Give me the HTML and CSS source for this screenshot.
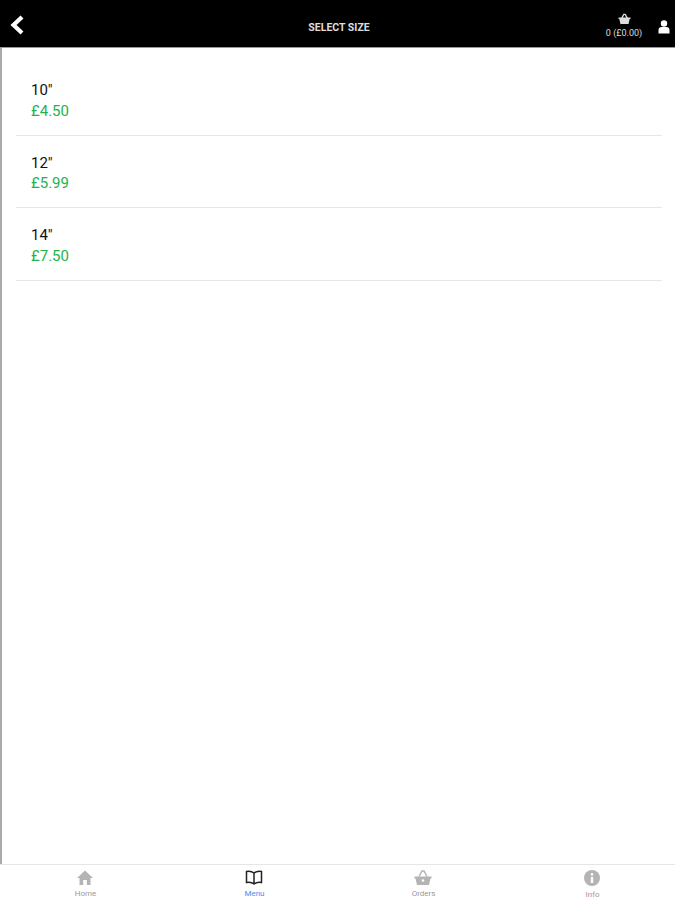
FILE: index.html
```html
<!doctype html>
<html>
<head>
<meta charset="utf-8">
<title>Select size</title>
<link rel="stylesheet" href="styles.css">
</head>
<body>
<div class="page">
  <div class="header">
    <div class="back">
      <svg width="16" height="22" viewBox="0 0 16 22"><path d="M13 3 L4.500 11 L13 19" fill="none" stroke="#fff" stroke-width="4.200"/></svg>
    </div>
    <div class="title">SELECT SIZE</div>
    <div class="basket">
      <svg width="13" height="11" viewBox="0 0 24 20"><path d="M1 8h22v3h-1.500l-2 9h-15l-2-9H1z M6 8l4-7h4l4 7h-3l-2.500-4.500h-1L9 8z" fill="#ddd"/></svg>
      <div class="basket-text">0 (£0.00)</div>
    </div>
    <div class="user">
      <svg width="12" height="14" viewBox="0 0 12 14"><circle cx="6" cy="3.500" r="3.200" fill="#fff"/><path d="M0.500 13.500v-3.500c0-2 1.500-3 3-3h5c1.500 0 3 1 3 3v3.500z" fill="#fff"/></svg>
    </div>
  </div>

  <div class="content">
    <div class="list">
      <div class="row"><div class="size">10"</div><div class="price">£4.50</div></div>
      <div class="row"><div class="size">12"</div><div class="price">£5.99</div></div>
      <div class="row"><div class="size">14"</div><div class="price">£7.50</div></div>
    </div>
  </div>

  <div class="tabs">
    <div class="tab">
      <svg width="16" height="15" viewBox="0 0 16 15"><path d="M8 0.500 L16 8 H13.500 V15 H9.800 V10 H6.200 V15 H2.500 V8 H0 Z" fill="#b4b4b4"/></svg>
      <div class="tab-label">Home</div>
    </div>
    <div class="tab active">
      <svg width="18" height="15" viewBox="0 0 18 15"><path d="M9 3 C7 1.500 4 1 1.500 1.500 V12.500 C4 12 7 12.300 9 14 C11 12.300 14 12 16.500 12.500 V1.500 C14 1 11 1.500 9 3 Z M9 3 V14" fill="none" stroke="#222" stroke-width="1.500"/></svg>
      <div class="tab-label">Menu</div>
    </div>
    <div class="tab">
      <svg width="18" height="15" viewBox="0 0 18 15"><path d="M0.500 6.500h17v2h-1l-1.500 6.500h-12l-1.500-6.500h-1z" fill="#b4b4b4"/><path d="M5 6.500 L8 1 h2 l3 5.500" fill="none" stroke="#b4b4b4" stroke-width="1.500"/><circle cx="9" cy="10.500" r="1.300" fill="#fff"/></svg>
      <div class="tab-label">Orders</div>
    </div>
    <div class="tab">
      <svg width="16" height="16" viewBox="0 0 16 16"><circle cx="8" cy="8" r="8" fill="#b4b4b4"/><rect x="6.800" y="7" width="2.400" height="6" fill="#fff"/><rect x="6.800" y="3.200" width="2.400" height="2.400" fill="#fff"/></svg>
      <div class="tab-label">Info</div>
    </div>
  </div>
</div>
</body>
</html>
```

FILE: styles.css
```css
html, body {
    margin: 0;
    padding: 0;
    height: 100%;
}
body {
    font-family: "Roboto", "Liberation Sans", sans-serif;
    background: #fff;
}
.page {
    display: flex;
    flex-direction: column;
    height: 900px;
    overflow: hidden;
}
.header {
    display: flex;
    align-items: center;
    box-sizing: border-box;
    height: 48px;
    padding-top: 8px;
    flex: none;
    background: #000;
    border-bottom: 1px solid #999;
    color: #ddd;
}
.back {
    display: flex;
    width: 298px;
    padding-left: 9px;
    margin-top: -6px;
    box-sizing: border-box;
}
.title {
    width: 82px;
    text-align: center;
    font-size: 10.500px;
    font-weight: 700;
    white-space: nowrap;
}
.basket {
    display: flex;
    flex-direction: column;
    align-items: center;
    width: 40px;
    margin-left: 224px;
    margin-top: -3px;
}
.basket-text {
    font-size: 9px;
    line-height: 12px;
    margin-top: 3px;
    white-space: nowrap;
}
.user {
    display: flex;
    margin-left: 14px;
    margin-top: -1px;
}
.content {
    flex: 1;
    border-left: 2px solid #aaa;
    padding: 15px 13px 0 14px;
}
.row {
    height: 54.500px;
    padding-top: 17px;
    padding-left: 15px;
    border-bottom: 1px solid #e6e6e6;
}
.size {
    font-size: 15px;
    line-height: 21px;
    color: #111;
}
.price {
    font-size: 15px;
    line-height: 21px;
    margin-top: -0.500px;
    color: #22b34a;
}
.tabs {
    display: grid;
    grid-template-columns: repeat(4, 169px);
    height: 35px;
    padding-left: 1px;
    flex: none;
    border-top: 1px solid #e6e6e6;
}
.tab {
    display: flex;
    flex-direction: column;
    align-items: center;
    padding-top: 5px;
}
.tab svg {
    margin-right: 1px;
}
.tab-label {
    font-size: 8px;
    line-height: 10px;
    margin-top: 4px;
    color: #999;
}
.active .tab-label {
    color: #4a8df0;
}
```
